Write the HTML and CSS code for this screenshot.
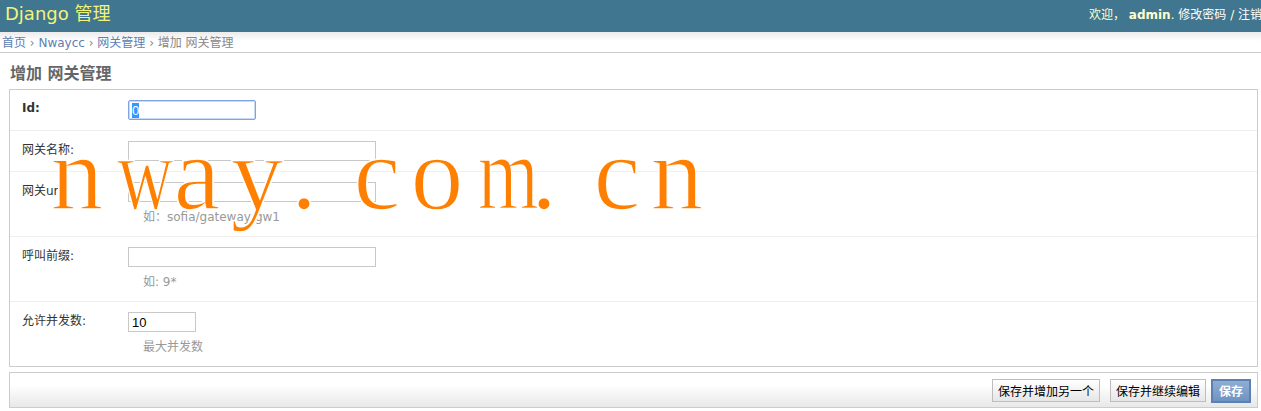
FILE: index.html
```html
<!DOCTYPE html>
<html lang="zh-CN">
<head>
<meta charset="utf-8">
<title>增加 网关管理 | Django 站点管理员</title>
<link rel="stylesheet" href="styles.css">
</head>
<body>
<div class="container">
  <header class="header">
    <div class="branding">Django 管理</div>
    <div class="user-tools">欢迎， <strong>admin</strong>. <a href="#">修改密码</a> / <a href="#">注销</a></div>
  </header>
  <nav class="breadcrumbs">
    <a href="#">首页</a> › <a href="#">Nwaycc</a> › <a href="#">网关管理</a> › <span class="crumb-current">增加 网关管理</span>
  </nav>
  <main class="content">
    <h1 class="page-title">增加 网关管理</h1>
    <form class="change-form">
      <fieldset class="module">
        <div class="form-row">
          <label class="field-label required" for="id_id">Id:</label>
          <div class="field">
            <input class="text-input input-short input-focus" id="id_id" type="text" value="0">
          </div>
        </div>
        <div class="form-row">
          <label class="field-label" for="id_name">网关名称:</label>
          <div class="field">
            <input class="text-input input-wide" id="id_name" type="text">
          </div>
        </div>
        <div class="form-row">
          <label class="field-label" for="id_url">网关url:</label>
          <div class="field">
            <input class="text-input input-wide" id="id_url" type="text">
            <p class="help">如：sofia/gateway/gw1</p>
          </div>
        </div>
        <div class="form-row">
          <label class="field-label" for="id_prefix">呼叫前缀:</label>
          <div class="field">
            <input class="text-input input-wide" id="id_prefix" type="text">
            <p class="help">如: 9*</p>
          </div>
        </div>
        <div class="form-row">
          <label class="field-label" for="id_max">允许并发数:</label>
          <div class="field">
            <input class="text-input input-tiny" id="id_max" type="text" value="10">
            <p class="help">最大并发数</p>
          </div>
        </div>
      </fieldset>
      <div class="submit-row">
        <button class="btn btn-addanother" type="button">保存并增加另一个</button>
        <button class="btn btn-continue" type="button">保存并继续编辑</button>
        <button class="btn btn-default" type="button">保存</button>
      </div>
    </form>
  </main>
  <div class="watermark"><span class="wm-ch">n</span><span class="wm-ch"><span class="wm-narrow">w</span></span><span class="wm-ch">a</span><span class="wm-ch">y</span><span class="wm-ch wm-dot">.</span><span class="wm-ch">c</span><span class="wm-ch">o</span><span class="wm-ch"><span class="wm-narrow">m</span></span><span class="wm-ch wm-dot">.</span><span class="wm-ch">c</span><span class="wm-ch">n</span></div>
</div>
<script src="script.js"></script>
</body>
</html>
```

FILE: styles.css
```css
* { box-sizing: border-box; }

html, body {
  margin: 0;
  padding: 0;
  background: #fff;
}

body {
  font-family: "DejaVu Sans", "Noto Sans CJK SC", sans-serif;
  font-size: 12px;
  color: #333;
  overflow: hidden;
}

a { text-decoration: none; }

.container {
  position: relative;
  width: 1261px;
  height: 411px;
  overflow: hidden;
}

/* header */
.header {
  height: 32px;
  background: #417690;
  display: flex;
  justify-content: space-between;
  align-items: flex-start;
  overflow: hidden;
}

.branding {
  padding: 2px 0 0 5px;
  font-size: 18px;
  line-height: 24px;
  color: #f4f379;
  white-space: nowrap;
}

.user-tools {
  padding-top: 8px;
  margin-right: -1px;
  font-size: 12px;
  line-height: 14px;
  color: #ffc;
  white-space: nowrap;
}

.user-tools strong { font-weight: bold; }
.user-tools a { color: #fff; }

/* breadcrumbs */
.breadcrumbs {
  height: 21px;
  padding: 4px 2px 0;
  font-size: 12px;
  line-height: 14px;
  color: #888;
  background: linear-gradient(#ebebeb, #fff 45%);
  border-bottom: 1px solid #ccc;
  white-space: nowrap;
}

.breadcrumbs a { color: #5b80b2; }
.crumb-current { color: #888; }

/* content */
.content {
  padding: 0 3px 0 9px;
}

.page-title {
  margin: 11px 0 5px 1px;
  font-size: 16px;
  line-height: 20px;
  font-weight: bold;
  color: #666;
}

.change-form { margin: 0; }

.module {
  margin: 0;
  padding: 0;
  min-width: 0;
  border: 1px solid #ccc;
}

.form-row {
  display: flex;
  align-items: flex-start;
  padding: 10px 12px 10px 12px;
  border-bottom: 1px solid #eee;
}

.form-row:has(.help) { padding-bottom: 11px; }
.form-row:last-child { border-bottom: none; }

.field-label {
  width: 106px;
  flex: none;
  padding-top: 1px;
  line-height: 16px;
  color: #333;
}

.field-label.required {
  padding-top: 0;
  font-weight: bold;
}

.field { display: flex; flex-direction: column; align-items: flex-start; }

.text-input {
  height: 20px;
  margin: 0;
  padding: 0 3px;
  font-family: "Liberation Sans", Arial, sans-serif;
  font-size: 13px;
  color: #000;
  background: #fff;
  border: 1px solid #c8c8c8;
  border-radius: 0;
  outline: none;
}

.text-input::selection { background: #3399ff; color: #fff; }

.input-short { width: 128px; }
.input-wide { width: 248px; }
.input-tiny { width: 68px; }

.input-focus {
  border: 1px solid #7ea4e5;
  border-radius: 2px;
  box-shadow: inset 0 0 0 1px #c9daf6;
}

.help {
  margin: 7px 0 0 15px;
  font-size: 12px;
  line-height: 16px;
  color: #999;
}

/* submit row */
.submit-row {
  margin-top: 5px;
  display: flex;
  justify-content: flex-end;
  align-items: flex-start;
  padding: 6px 6px 4px;
  border: 1px solid #ccc;
  background: linear-gradient(#fff 35%, #e8e8e8);
}

.btn {
  margin: 0;
  font-family: "Noto Sans CJK SC", "DejaVu Sans", sans-serif;
  font-size: 12px;
  color: #000;
  cursor: pointer;
}

.btn-addanother,
.btn-continue {
  height: 23px;
  padding: 0 5px;
  line-height: 21px;
  border: 1px solid #bdbdbd;
  background: linear-gradient(#fff, #e6e6e6);
}

.btn-addanother { margin-right: 10px; }
.btn-continue { margin-right: 5px; }

.btn-default {
  height: 24px;
  padding: 0 6px;
  line-height: 20px;
  font-weight: bold;
  color: #fff;
  border: 2px solid #5b80b2;
  background: linear-gradient(#8fadd2, #6f94c2);
}

/* watermark overlay */
.watermark {
  position: absolute;
  left: 47px;
  top: 121px;
  display: flex;
  font-family: "Liberation Serif", "Times New Roman", serif;
  font-size: 106px;
  line-height: 106px;
  color: #ff8000;
  -webkit-text-stroke: 1.6px #fff;
  white-space: nowrap;
  pointer-events: none;
}

.wm-ch {
  display: inline-block;
  width: 60px;
  text-align: center;
}

.wm-narrow {
  display: inline-block;
  transform: scaleX(0.74);
}

.wm-dot {
  padding-right: 26px;
}
```

FILE: script.js
```js
var idField = document.getElementById('id_id');
idField.focus();
idField.select();
```
